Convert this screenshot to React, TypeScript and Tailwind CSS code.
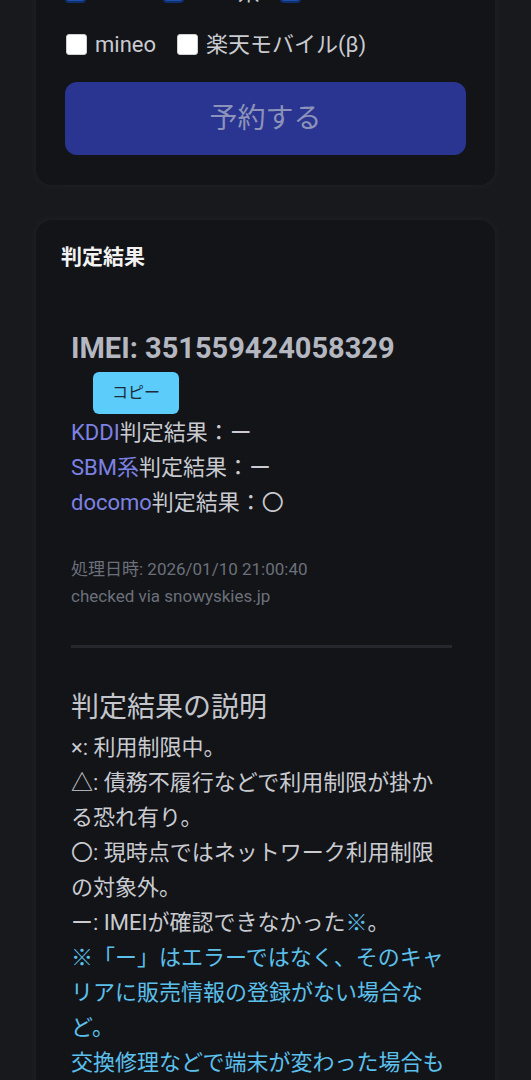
import React from "react";

const font = { fontFamily: 'Roboto, "Noto Sans CJK JP", sans-serif' };

function Box({ checked }: { checked?: boolean }) {
  return checked ? (
    <span className="inline-block w-[21px] h-[21px] rounded-[4px] bg-[#1d4fa8] border-2 border-[#0f2f6e] shrink-0" />
  ) : (
    <span className="inline-block w-[21px] h-[21px] rounded-[3px] bg-white border border-[#d0d0d0] shrink-0" />
  );
}

function Check({ label, checked }: { label: string; checked?: boolean }) {
  return (
    <label className="flex items-center gap-[8px]">
      <Box checked={checked} />
      <span>{label}</span>
    </label>
  );
}

export default function App() {
  return (
    <div
      className="min-h-[1080px] bg-[#18191d] px-[36px] pb-[40px] overflow-hidden text-[#c9cbd1]"
      style={font}
    >
      {/* card 1 (scrolled, partially hidden) */}
      <div className="mt-[-47px] rounded-[16px] bg-[#131418] shadow-[0_0_10px_2px_rgba(255,255,255,0.03)] pt-[24px] pb-[30px] px-[29px]">
        <div className="flex items-center h-[30px] text-[22px] gap-[20px] pl-[0px]">
          <Check label="KDDI" checked />
          <Check label="SBM系" checked />
          <Check label="docomo" checked />
        </div>
        <div className="flex items-center h-[30px] mt-[22px] text-[22px] gap-[21px] pl-[1px]">
          <Check label="mineo" />
          <Check label="楽天モバイル(β)" />
        </div>
        <button className="mt-[23px] w-full h-[73px] rounded-[12px] bg-[#2a3592] text-[#8d93b8] text-[28px] flex items-center justify-center">
          予約する
        </button>
      </div>

      {/* card 2 */}
      <div className="mt-[35px] rounded-[16px] bg-[#131418] shadow-[0_0_10px_2px_rgba(255,255,255,0.03)] pt-[22px] pb-[40px] px-[25px]">
        <h2 className="text-[21px] leading-[30px] font-bold text-[#f2f2f2]">判定結果</h2>
        <div className="pl-[10px] pr-[18px]">
          <div className="mt-[58px] text-[29px] leading-[36px] font-bold text-[#b4b7c0]">
            IMEI: 351559424058329
          </div>
          <button className="ml-[22px] mt-[6px] w-[86px] h-[42px] rounded-[6px] bg-[#5ccdfb] text-[#1b2b3c] text-[16px] flex items-center justify-center">
            コピー
          </button>
          <div className="text-[22px] leading-[35px] mt-[1px]">
            <div>
              <span className="text-[#7c82e4]">KDDI</span>判定結果：ー
            </div>
            <div>
              <span className="text-[#7c82e4]">SBM系</span>判定結果：ー
            </div>
            <div>
              <span className="text-[#7c82e4]">docomo</span>判定結果：〇
            </div>
          </div>
          <div className="mt-[36px] text-[17px] leading-[27px] text-[#6b707a]">
            <div>処理日時: 2026/01/10 21:00:40</div>
            <div>checked via snowyskies.jp</div>
          </div>
          <div className="mt-[35px] h-[3px] bg-[#25272c]" />
          <h3 className="mt-[40px] text-[28px] leading-[40px] text-[#c4c6cc]">判定結果の説明</h3>
          <div className="text-[22px] leading-[35px] mt-[2px]">
            <div>×: 利用制限中。</div>
            <div>△: 債務不履行などで利用制限が掛かる恐れ有り。</div>
            <div>〇: 現時点ではネットワーク利用制限の対象外。</div>
            <div>
              ー: IMEIが確認できなかった<span className="text-[#5cc0ec]">※</span>。
            </div>
            <div className="text-[#5cc0ec]">
              ※「ー」はエラーではなく、そのキャリアに販売情報の登録がない場合など。
            </div>
            <div className="text-[#5cc0ec]">
              交換修理などで端末が変わった場合も登録がない場合があります。
            </div>
          </div>
        </div>
      </div>
    </div>
  );
}
